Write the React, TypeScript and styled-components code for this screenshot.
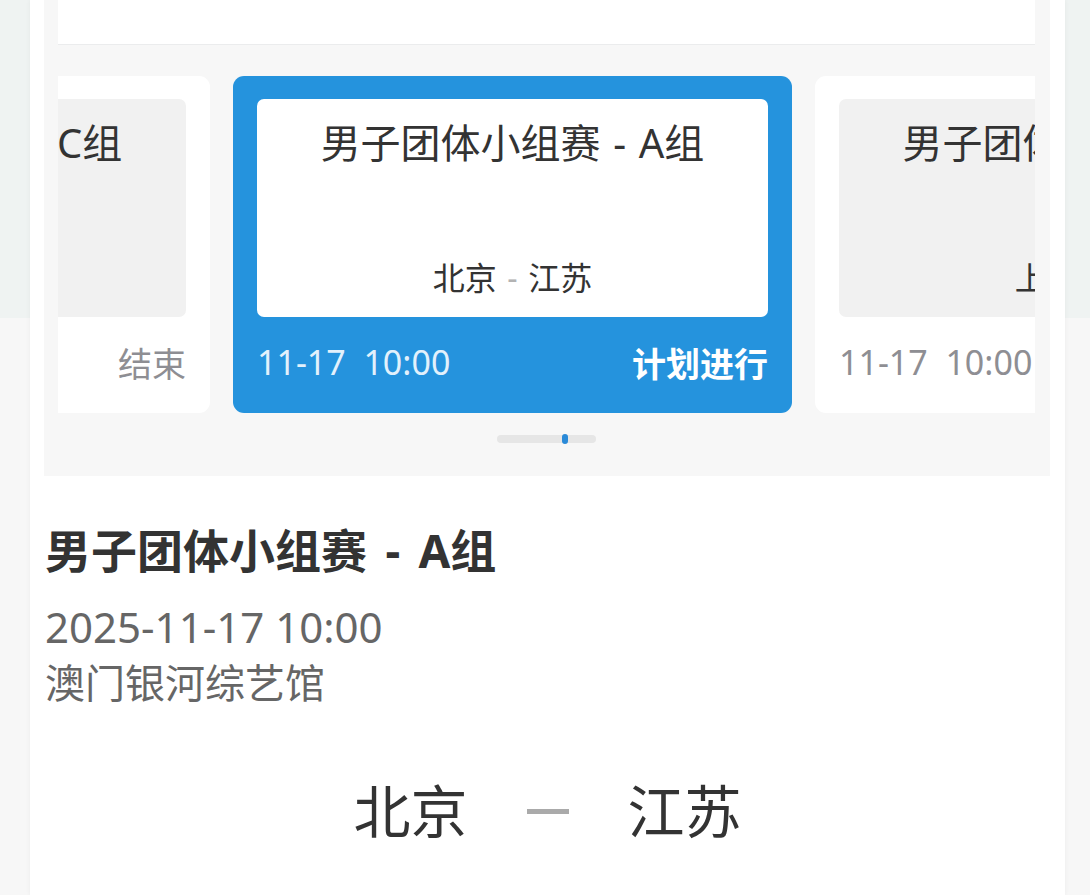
import styled, { createGlobalStyle } from "styled-components";

const GlobalStyle = createGlobalStyle`
  * { box-sizing: border-box; }
  html, body {
    margin: 0;
    padding: 0;
  }
  body {
    font-family: "Noto Sans", "Noto Sans CJK SC", sans-serif;
    background: linear-gradient(#eff3f2 0, #eff3f2 318px, #f7f7f7 318px);
    overflow: hidden;
  }
`;

const Panel = styled.div`
  margin-left: 30px;
  width: 1035px;
  min-height: 100vh;
  background: #ffffff;
  box-shadow: 0 0 5px rgba(0, 0, 0, 0.05);
  padding-bottom: 40px;
`;

const CarouselSection = styled.section`
  margin: 0 15px 0 14px;
  background: #f7f7f7;
  padding: 0 15px 33px 14px;
`;

const TopStrip = styled.div`
  height: 45px;
  background: #ffffff;
  border-bottom: 1px solid #ebeced;
`;

const Viewport = styled.div`
  margin-top: 31px;
  overflow: hidden;
`;

const Track = styled.div<{ $offset: number }>`
  display: flex;
  gap: 23px;
  transform: translateX(${(p) => -p.$offset}px);
`;

const Card = styled.div<{ $active?: boolean }>`
  flex: 0 0 559px;
  height: 337px;
  border-radius: 11px;
  background: ${(p) => (p.$active ? "#2593dd" : "#ffffff")};
  padding: 23px 24px 0;
  display: flex;
  flex-direction: column;
`;

const CardBody = styled.div<{ $active?: boolean }>`
  height: 218px;
  border-radius: 7px;
  background: ${(p) => (p.$active ? "#ffffff" : "#f1f1f1")};
  padding: 24px 0 20px;
  display: flex;
  flex-direction: column;
  justify-content: space-between;
  align-items: center;
  text-align: center;
  white-space: nowrap;
  word-spacing: 0.14em;
`;

const CardTitle = styled.div`
  font-size: 40px;
  line-height: 40px;
  color: #333333;
`;

const CardTeams = styled.div`
  font-size: 32px;
  line-height: 38px;
  color: #333333;
`;

const Dash = styled.span`
  color: #b3b3b3;
`;

const CardFooter = styled.div<{ $active?: boolean }>`
  flex: 1;
  display: flex;
  align-items: center;
  justify-content: space-between;
  font-size: 34px;
  padding-bottom: 6px;
  white-space: pre;
  color: ${(p) => (p.$active ? "#e2f1fc" : "#8e8e93")};
`;

const Status = styled.span<{ $active?: boolean }>`
  font-weight: ${(p) => (p.$active ? 700 : 400)};
  color: ${(p) => (p.$active ? "#ffffff" : "#8e8e93")};
`;

const Indicator = styled.div`
  position: relative;
  margin: 22px auto 0;
  width: 99px;
  height: 8px;
  border-radius: 4px;
  background: #e6e6e6;
`;

const Thumb = styled.div`
  position: absolute;
  left: 65px;
  top: -1px;
  width: 6px;
  height: 10px;
  border-radius: 3px;
  background: #2a8ad8;
`;

const Detail = styled.section`
  padding: 46px 15px 0;
`;

const DetailTitle = styled.h1`
  margin: 0;
  font-size: 46px;
  line-height: 57px;
  font-weight: 700;
  word-spacing: 0.14em;
  color: #333333;
`;

const Meta = styled.div<{ $first?: boolean; $size: number }>`
  margin-top: ${(p) => (p.$first ? "20px" : "0")};
  font-size: ${(p) => p.$size}px;
  line-height: 56px;
  color: #666666;
`;

const VersusRow = styled.div`
  margin-top: 64px;
  display: flex;
  justify-content: center;
  align-items: center;
  gap: 59px;
  font-size: 57px;
  line-height: 72px;
  color: #333333;
`;

const VersusDash = styled.span`
  width: 42px;
  height: 5px;
  background: #aaaaaa;
`;

type Match = {
  title: string;
  home: string;
  away: string;
  time: string;
  status: string;
};

const matches: Match[] = [
  { title: "男子团体小组赛 - C组", home: "广东", away: "山东", time: "11-17  10:00", status: "结束" },
  { title: "男子团体小组赛 - A组", home: "北京", away: "江苏", time: "11-17  10:00", status: "计划进行" },
  { title: "男子团体小组赛 - B组", home: "上海", away: "四川", time: "11-17  10:00", status: "计划进行" },
];

const activeIndex = 1;

export default function App() {
  const current = matches[activeIndex];
  return (
    <>
      <GlobalStyle />
      <Panel>
        <CarouselSection>
          <TopStrip />
          <Viewport>
            <Track $offset={407}>
              {matches.map((m, i) => {
                const active = i === activeIndex;
                return (
                  <Card key={i} $active={active}>
                    <CardBody $active={active}>
                      <CardTitle>{m.title}</CardTitle>
                      <CardTeams>
                        {m.home} <Dash>-</Dash> {m.away}
                      </CardTeams>
                    </CardBody>
                    <CardFooter $active={active}>
                      <span>{m.time}</span>
                      <Status $active={active}>{m.status}</Status>
                    </CardFooter>
                  </Card>
                );
              })}
            </Track>
          </Viewport>
          <Indicator>
            <Thumb />
          </Indicator>
        </CarouselSection>
        <Detail>
          <DetailTitle>{current.title}</DetailTitle>
          <Meta $first $size={42}>2025-11-17 10:00</Meta>
          <Meta $size={40}>澳门银河综艺馆</Meta>
          <VersusRow>
            <span>{current.home}</span>
            <VersusDash />
            <span>{current.away}</span>
          </VersusRow>
        </Detail>
      </Panel>
    </>
  );
}
